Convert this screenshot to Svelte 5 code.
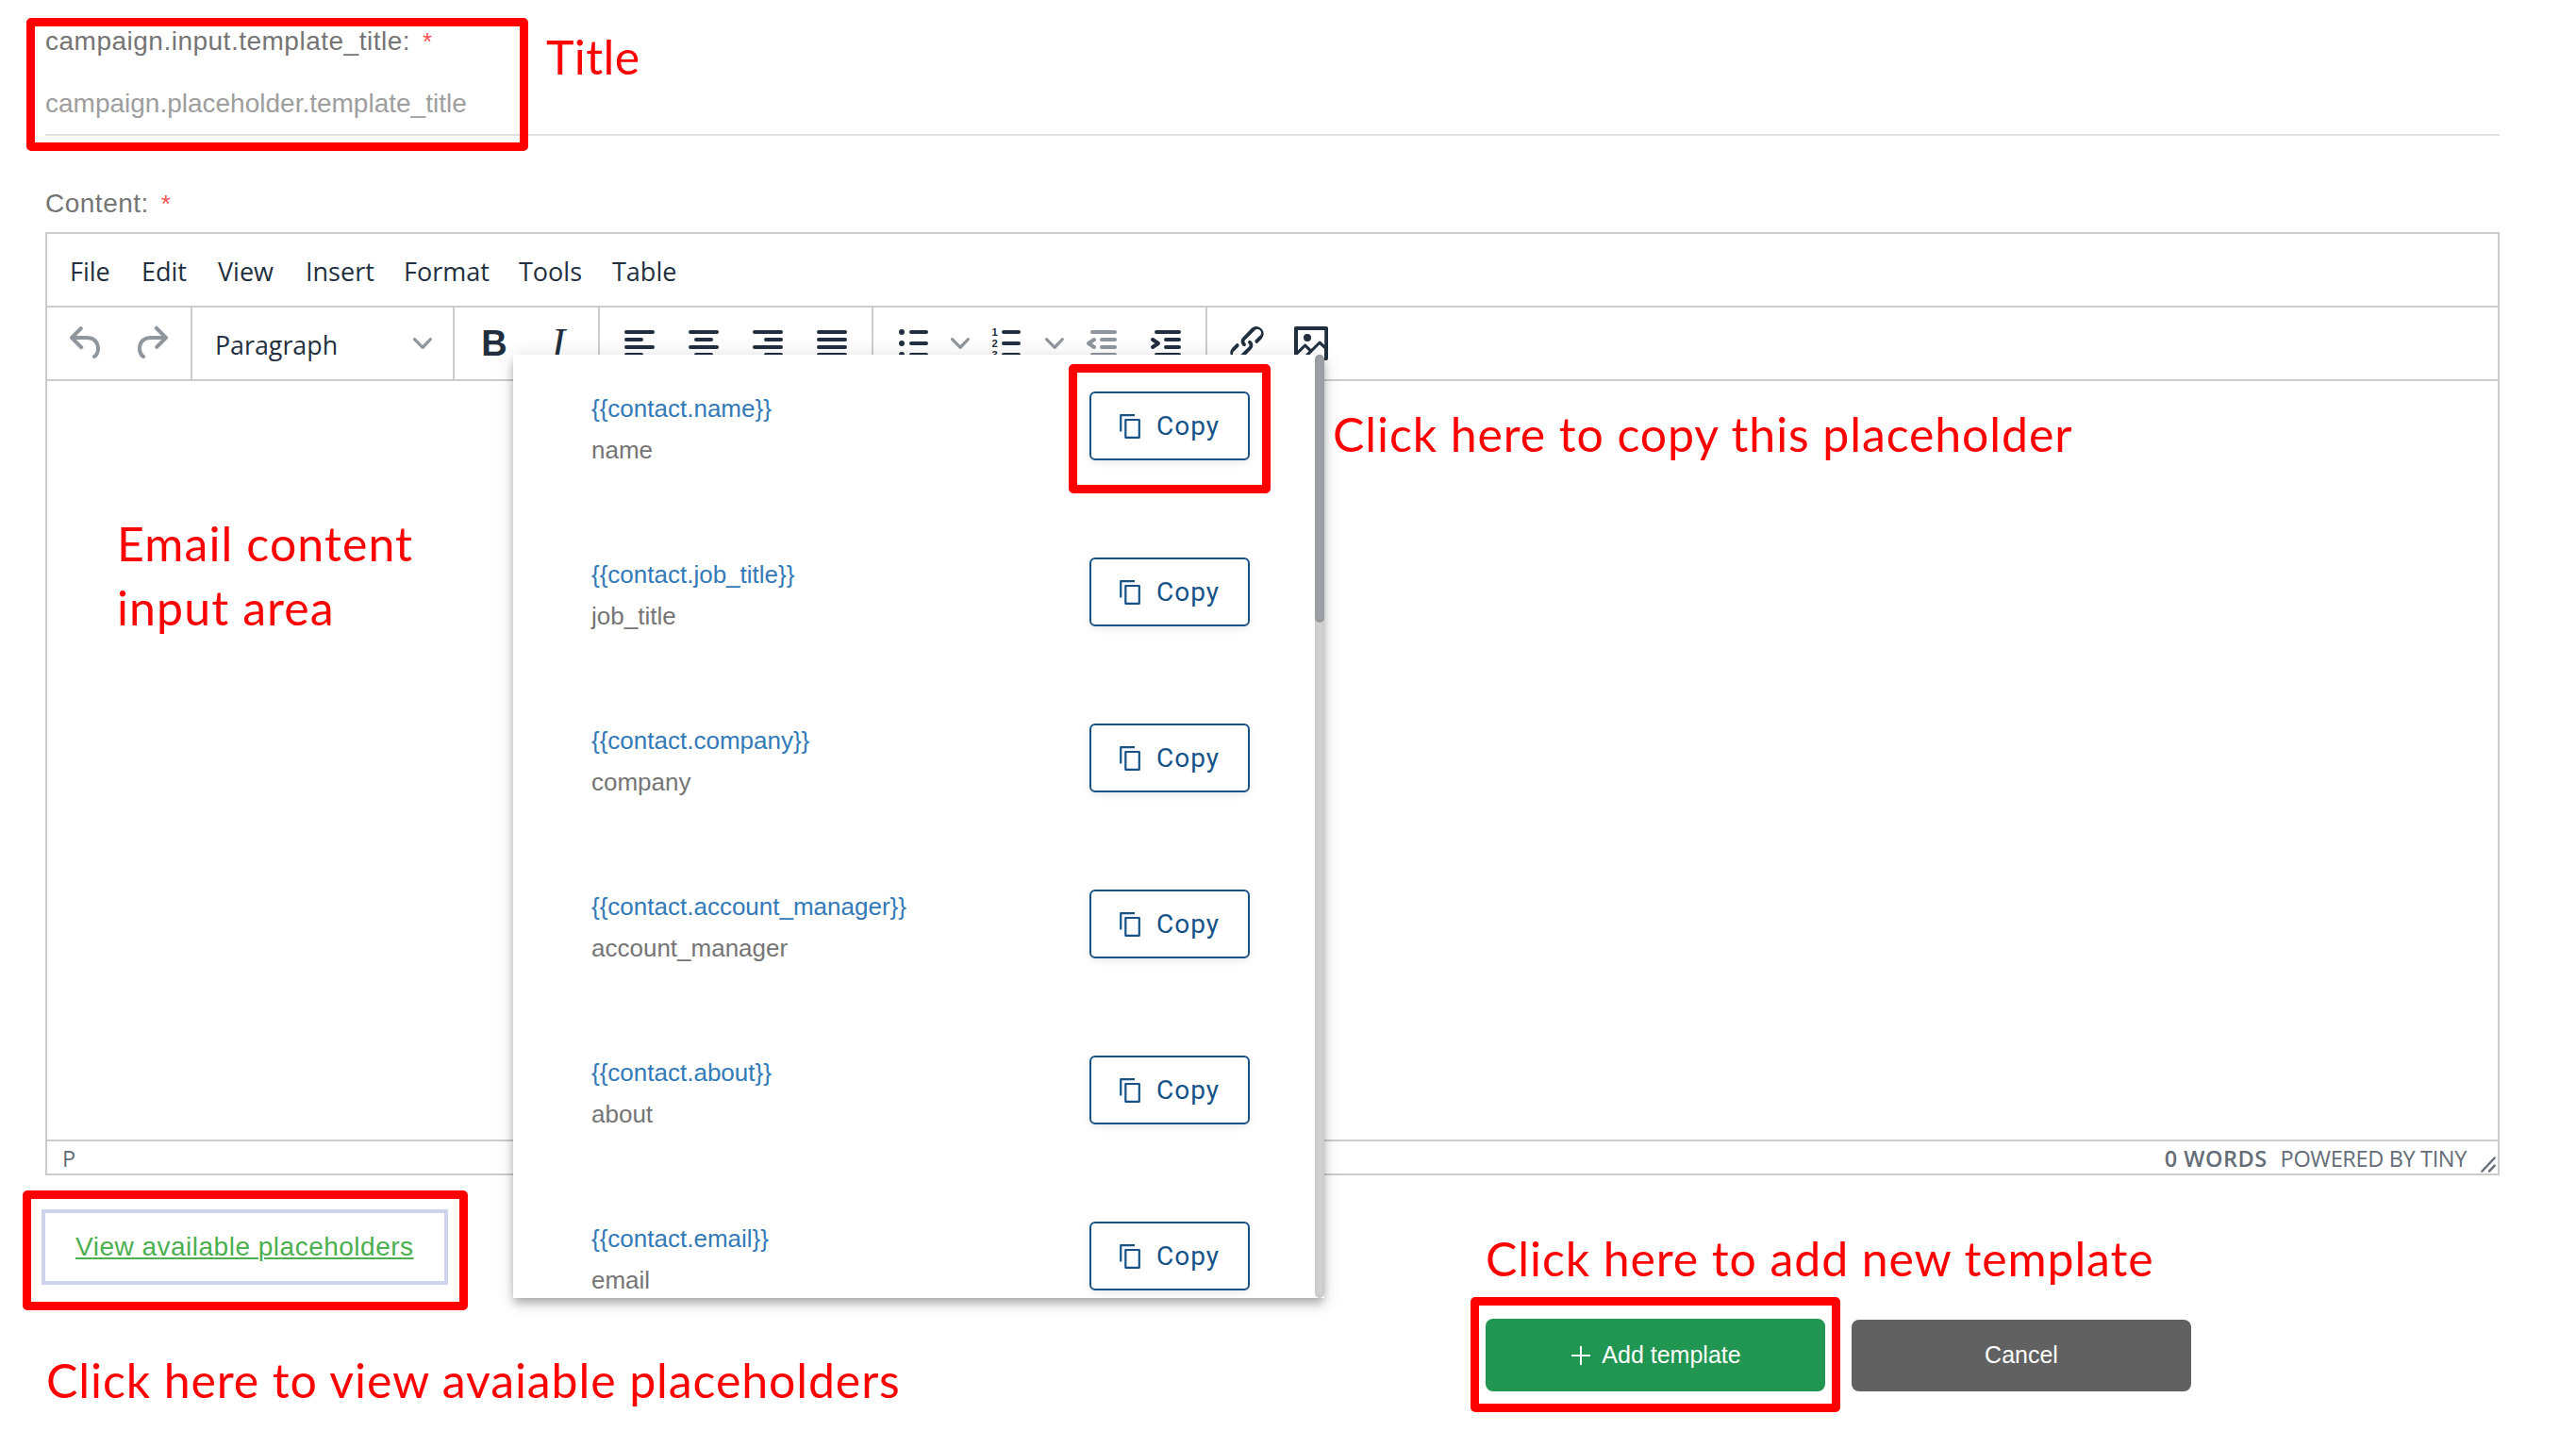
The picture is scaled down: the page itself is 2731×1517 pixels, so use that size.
<script>
  // Editor menus, with the space each one takes up in the menubar
  const menus = [
    { name: 'File', width: 76 },
    { name: 'Edit', width: 81 },
    { name: 'View', width: 93 },
    { name: 'Insert', width: 104 },
    { name: 'Format', width: 122 },
    { name: 'Tools', width: 99 },
    { name: 'Table', width: 98 }
  ];

  // Contact placeholders listed in the popup
  const placeholders = ['name', 'job_title', 'company', 'account_manager', 'about', 'email'];

  // x, y, width of each bar, in the 24px icon grid
  const aligns = [
    [[4, 5, 16], [4, 9, 10], [4, 13, 16], [4, 17, 10]],
    [[4, 5, 16], [7, 9, 10], [4, 13, 16], [7, 17, 10]],
    [[4, 5, 16], [10, 9, 10], [4, 13, 16], [10, 17, 10]],
    [[4, 5, 16], [4, 9, 16], [4, 13, 16], [4, 17, 16]]
  ];
  const indentBars = [[6, 5, 14], [11, 9, 9], [11, 13, 9], [6, 17, 14]];

  let title = '';
</script>

{#snippet bars(list)}
  {#each list as [x, y, width]}
    <rect {x} {y} {width} height="2" rx="1" />
  {/each}
{/snippet}

{#snippet chevron()}
  <svg class="chevron" viewBox="0 0 10 10">
    <path d="M8.7 2.2c.3-.3.8-.3 1 0 .4.4.4.9 0 1.2L5.7 7.8c-.3.3-.9.3-1.2 0L.2 3.4a.8.8 0 010-1.2c.3-.3.8-.3 1.1 0L5 6l3.7-3.8z" />
  </svg>
{/snippet}

<div class="page">
  <form class="template-form">
    <label class="label" for="title">campaign.input.template_title:<span class="required">*</span></label>
    <input id="title" class="title-input" placeholder="campaign.placeholder.template_title" bind:value={title} />

    <div class="label content-label">Content:<span class="required">*</span></div>

    <div class="editor">
      <div class="menubar">
        {#each menus as menu}
          <span class="menu" style="width: {menu.width}px">{menu.name}</span>
        {/each}
      </div>

      <div class="toolbar">
        <div class="group">
          <span class="tool disabled">
            <svg viewBox="0 0 24 24"><path d="M6.4 8H12c3.7 0 6.2 2 6.8 5.1.6 2.7-.4 5.6-2.3 6.8a1 1 0 01-1-1.8c1.1-.6 1.8-2.7 1.4-4.6-.5-2.1-2.1-3.5-4.9-3.5H6.4l3.3 3.3a1 1 0 11-1.4 1.4l-5-5a1 1 0 010-1.4l5-5a1 1 0 011.4 1.4L6.4 8z" /></svg>
          </span>
          <span class="tool disabled">
            <svg viewBox="0 0 24 24"><path d="M17.6 10H12c-2.8 0-4.4 1.4-4.9 3.5-.4 2 .3 4 1.4 4.6a1 1 0 11-1 1.8c-2-1.2-2.9-4.1-2.3-6.8.6-3 3-5.1 6.8-5.1h5.6l-3.3-3.3a1 1 0 111.4-1.4l5 5a1 1 0 010 1.4l-5 5a1 1 0 01-1.4-1.4l3.3-3.3z" /></svg>
          </span>
        </div>
        <div class="group">
          <span class="format-select">
            <span class="format-name">Paragraph</span>
            {@render chevron()}
          </span>
        </div>
        <div class="group">
          <span class="tool bold">B</span>
          <span class="tool italic">I</span>
        </div>
        <div class="group">
          {#each aligns as align}
            <span class="tool"><svg viewBox="0 0 24 24">{@render bars(align)}</svg></span>
          {/each}
        </div>
        <div class="group">
          <span class="tool">
            <svg viewBox="0 0 24 24">
              {@render bars([[10, 5, 10], [10, 11, 10], [10, 17, 10]])}
              <circle cx="6" cy="6" r="1.5" />
              <circle cx="6" cy="12" r="1.5" />
              <circle cx="6" cy="18" r="1.5" />
            </svg>
          </span>
          <span class="split">{@render chevron()}</span>
          <span class="tool">
            <svg viewBox="0 0 24 24">
              {@render bars([[9, 5, 10], [9, 11, 10], [9, 17, 10]])}
              <text x="3.7" y="8">1</text>
              <text x="3.7" y="14">2</text>
              <text x="3.7" y="20">3</text>
            </svg>
          </span>
          <span class="split">{@render chevron()}</span>
          <span class="tool disabled">
            <svg viewBox="0 0 24 24">
              {@render bars(indentBars)}
              <path class="stroke" d="M8 10l-3 2 3 2" />
            </svg>
          </span>
          <span class="tool">
            <svg viewBox="0 0 24 24">
              {@render bars(indentBars)}
              <path class="stroke" d="M5 10l3 2-3 2" />
            </svg>
          </span>
        </div>
        <div class="group">
          <span class="tool">
            <svg viewBox="0 0 24 24"><path d="M6.2 12.3a1 1 0 011.4 1.4l-2 2a2 2 0 102.6 2.8l4.8-4.8a1 1 0 000-1.4 1 1 0 111.4-1.3 2.9 2.9 0 010 4L9.6 20a3.9 3.9 0 01-5.5-5.5l2-2zm11.6-.6a1 1 0 01-1.4-1.4l2-2a2 2 0 10-2.6-2.8L11 10.3a1 1 0 000 1.4A1 1 0 119.6 13a2.9 2.9 0 010-4L14.4 4a3.9 3.9 0 015.5 5.5l-2 2z" /></svg>
          </span>
          <span class="tool">
            <svg viewBox="0 0 24 24"><path fill-rule="evenodd" d="M5 15.7l3.3-3.2c.3-.3.7-.3 1 0L12 15l4.1-4c.3-.4.8-.4 1 0l2 1.9V5H5v10.7zM5 18V19h3l2.8-2.9-2-2L5 17.9zm14-3l-2.5-2.4-6.4 6.5H19v-4zM4 3h16c.6 0 1 .4 1 1v16c0 .6-.4 1-1 1H4a1 1 0 01-1-1V4c0-.6.4-1 1-1zm6 8a2 2 0 100-4 2 2 0 000 4z" /></svg>
          </span>
        </div>
      </div>

      <div class="edit-area"></div>

      <div class="statusbar">
        <span class="path">P</span>
        <span class="words">0 WORDS</span>
        <span class="branding">POWERED BY TINY</span>
        <svg class="resize" viewBox="0 0 16 17"><path d="M1.3 15.7L14.7 1.5M9 15.7l5.7-6" /></svg>
      </div>
    </div>

    <div class="footer">
      <a class="view-link" href="#placeholders">View available placeholders</a>
      <div class="actions">
        <button type="button" class="btn add">
          <svg viewBox="0 0 20 20"><path d="M10 0v20M0 10h20" /></svg>
          Add template
        </button>
        <button type="button" class="btn cancel">Cancel</button>
      </div>
    </div>
  </form>

  <!-- Placeholder popup, floating over the editor -->
  <div class="popup">
    <div class="popup-list">
      {#each placeholders as name}
        <div class="placeholder">
          <div>
            <div class="code">{`{{contact.${name}}}`}</div>
            <div class="name">{name}</div>
          </div>
          <button type="button" class="copy">
            <svg viewBox="0 0 23 26"><path d="M1.2 18.5V1.2H16M6.3 6h14.5v18.8H6.3z" /></svg>
            Copy
          </button>
        </div>
      {/each}
    </div>
    <div class="scrollbar"><div class="thumb"></div></div>
  </div>

  <!-- Callouts -->
  <div class="frame frame-title"></div>
  <div class="frame frame-copy"></div>
  <div class="frame frame-view"></div>
  <div class="frame frame-add"></div>
  <div class="note note-title">Title</div>
  <div class="note note-copy">Click here to copy this placeholder</div>
  <div class="note note-content">Email content<br />input area</div>
  <div class="note note-view">Click here to view avaiable placeholders</div>
  <div class="note note-add">Click here to add new template</div>
</div>

<style>
  :global(body) {
    margin: 0;
    background: #fff;
  }

  .page {
    position: relative;
    width: 2731px;
    height: 1517px;
    box-sizing: border-box;
    padding: 26px 81px 0 48px;
    overflow: hidden;
    background: #fff;
    font-family: "Liberation Sans", Arial, sans-serif;
    font-size: 28px;
  }

  .template-form {
    display: flex;
    flex-direction: column;
  }

  .label {
    display: block;
    height: 36px;
    line-height: 36px;
    letter-spacing: 0.5px;
    color: #757575;
  }

  .required {
    margin-left: 13px;
    font-size: 26px;
    color: #ff5252;
  }

  .title-input {
    height: 82px;
    box-sizing: border-box;
    padding: 16px 0 0;
    border: none;
    border-bottom: 2px solid #e0e0e0;
    outline: none;
    background: transparent;
    font: inherit;
    color: #757575;
  }

  .title-input::placeholder {
    color: #9e9e9e;
    opacity: 1;
  }

  .content-label {
    margin-top: 54px;
    margin-bottom: 12px;
  }

  /* Editor */
  .editor {
    display: flex;
    flex-direction: column;
    height: 1000px;
    box-sizing: border-box;
    border: 2px solid #ccc;
    font-family: "Open Sans", "Noto Sans", sans-serif;
    color: #222f3e;
  }

  .menubar {
    display: flex;
    align-items: center;
    height: 78px;
    padding: 3px 0 0 24px;
    box-sizing: border-box;
    border-bottom: 2px solid #ccc;
    font-size: 27px;
  }

  .toolbar {
    display: flex;
    height: 76px;
    border-bottom: 2px solid #ccc;
  }

  .group {
    display: flex;
    align-items: center;
    padding: 0 8px;
    border-right: 2px solid #ccc;
  }

  .group:last-child {
    border-right: none;
  }

  .tool {
    display: flex;
    justify-content: center;
    align-items: center;
    width: 68px;
    height: 68px;
  }

  .tool svg {
    width: 48px;
    height: 48px;
    fill: #222f3e;
  }

  .tool text {
    font: 700 5.6px "Liberation Sans", Arial, sans-serif;
  }

  .stroke {
    fill: none;
    stroke: #222f3e;
    stroke-width: 2;
    stroke-linecap: round;
    stroke-linejoin: round;
  }

  .disabled {
    opacity: 0.5;
  }

  .bold {
    font: 700 38px/68px "Liberation Sans", Arial, sans-serif;
  }

  .italic {
    font: italic 44px/68px "Liberation Serif", "Times New Roman", serif;
  }

  .split {
    display: flex;
    justify-content: center;
    width: 32px;
  }

  .chevron {
    width: 20px;
    height: 20px;
    fill: #222f3e;
    opacity: 0.5;
  }

  .format-select {
    display: flex;
    align-items: center;
    justify-content: space-between;
    width: 230px;
    padding: 0 14px 0 16px;
  }

  .format-name {
    padding-top: 3px;
    font-size: 26.8px;
  }

  .edit-area {
    flex: 1;
  }

  .statusbar {
    display: flex;
    align-items: center;
    height: 34px;
    padding-left: 16px;
    border-top: 2px solid #ccc;
    font-size: 23.5px;
    line-height: 34px;
    color: #646d78;
  }

  .statusbar span {
    padding-top: 2px;
  }

  .words {
    margin-left: auto;
    font-weight: 600;
    letter-spacing: 0.5px;
  }

  .branding {
    margin-left: 14px;
    letter-spacing: -0.35px;
  }

  .resize {
    align-self: flex-end;
    width: 16px;
    height: 17px;
    margin: 0 2px 1px 15px;
    fill: none;
    stroke: #646d78;
    stroke-width: 2.4;
    stroke-linecap: round;
  }

  /* Bottom row */
  .footer {
    display: flex;
    justify-content: space-between;
    align-items: flex-start;
  }

  .view-link {
    height: 80px;
    margin: 36px 0 0 -4px;
    padding: 0 32px;
    box-sizing: border-box;
    border: 4px solid #cfd4ec;
    line-height: 71px;
    letter-spacing: 0.5px;
    color: #4caf50;
    text-underline-offset: 2px;
    text-decoration-thickness: 2px;
  }

  .actions {
    display: flex;
    align-items: flex-end;
    gap: 28px;
    margin: 152px 327px 0 0;
  }

  .btn {
    display: flex;
    align-items: center;
    justify-content: center;
    gap: 12px;
    width: 360px;
    height: 77px;
    padding: 0;
    border: none;
    border-radius: 8px;
    font: 25px "Liberation Sans", Arial, sans-serif;
    color: #fff;
  }

  .btn svg {
    width: 20px;
    height: 20px;
    stroke: #fff;
    stroke-width: 2;
  }

  .add {
    padding-left: 2px;
    background: #219653;
  }

  .cancel {
    height: 76px;
    padding-bottom: 1px;
    background: #616161;
  }

  /* Popup */
  .popup {
    position: absolute;
    left: 544px;
    top: 376px;
    display: flex;
    width: 860px;
    height: 1000px;
    background: #fff;
    box-shadow:
      0 4px 8px -2px rgba(0, 0, 0, 0.2),
      0 8px 10px rgba(0, 0, 0, 0.14),
      0 2px 20px rgba(0, 0, 0, 0.12);
  }

  .popup-list {
    flex: 1;
    overflow: hidden;
    padding: 39px 69px 0 83px;
  }

  .placeholder {
    display: flex;
    justify-content: space-between;
    align-items: flex-start;
    height: 176px;
    font-size: 26px;
    line-height: 44px;
  }

  .code {
    margin-top: -4px;
    color: #337ab7;
  }

  .name {
    color: #757575;
  }

  .copy {
    display: flex;
    align-items: center;
    gap: 16px;
    width: 170px;
    height: 73px;
    box-sizing: border-box;
    padding: 0 0 0 30px;
    border: 2px solid #155288;
    border-radius: 6px;
    background: #fff;
    box-shadow: 0 3px 8px rgba(0, 0, 0, 0.08);
    font: 28px Roboto, sans-serif;
    letter-spacing: 1px;
    color: #155288;
  }

  .copy svg {
    width: 23px;
    height: 26px;
    fill: none;
    stroke: #155288;
    stroke-width: 2.2;
    stroke-linejoin: round;
  }

  .scrollbar {
    width: 10px;
    border-radius: 5px;
    background: #d4d4d4;
    box-shadow: inset 0 0 6px rgba(0, 0, 0, 0.1);
  }

  .thumb {
    height: 284px;
    border-radius: 5px;
    background: #a0a4a8;
    box-shadow: inset 0 0 6px rgba(0, 0, 0, 0.1);
  }

  /* Callouts */
  .frame {
    position: absolute;
    box-sizing: border-box;
    border: 9px solid #f00;
    border-radius: 5px;
  }

  .frame-title {
    left: 28px;
    top: 19px;
    width: 532px;
    height: 141px;
  }

  .frame-copy {
    left: 1133px;
    top: 386px;
    width: 214px;
    height: 137px;
  }

  .frame-view {
    left: 24px;
    top: 1262px;
    width: 472px;
    height: 127px;
  }

  .frame-add {
    left: 1559px;
    top: 1375px;
    width: 392px;
    height: 122px;
  }

  .note {
    position: absolute;
    font-family: Lato, Carlito, Calibri, sans-serif;
    font-size: 50px;
    line-height: 68px;
    letter-spacing: 0.9px;
    white-space: nowrap;
    color: #f00;
  }

  .note-title {
    left: 579px;
    top: 26px;
    letter-spacing: 0.4px;
  }

  .note-copy {
    left: 1413px;
    top: 426px;
  }

  .note-content {
    left: 124px;
    top: 542px;
    letter-spacing: 1.1px;
  }

  .note-view {
    left: 49px;
    top: 1429px;
  }

  .note-add {
    left: 1575px;
    top: 1300px;
  }
</style>
